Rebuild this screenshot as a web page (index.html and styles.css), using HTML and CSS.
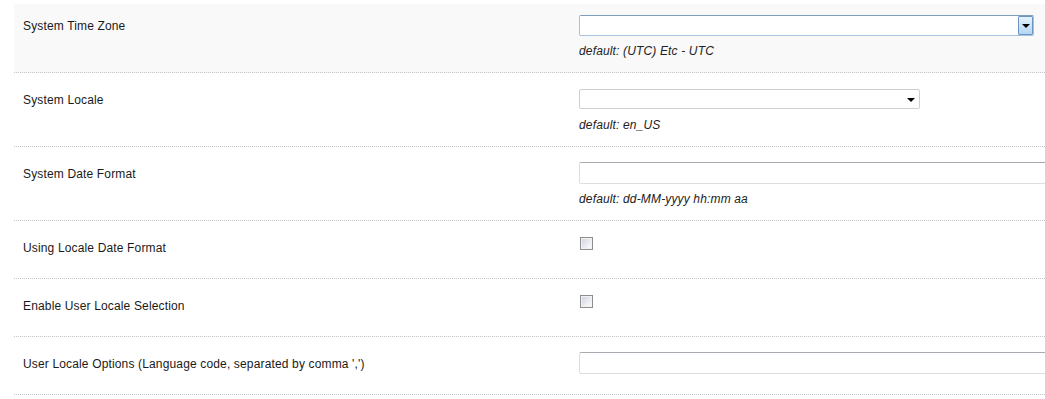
FILE: index.html
```html
<!DOCTYPE html>
<html>
<head>
<meta charset="utf-8">
<link rel="stylesheet" href="styles.css">
</head>
<body>
<div class="settings">
  <div class="row row-first row-hl">
    <div class="label">System Time Zone</div>
    <div class="field">
      <div class="tz-select"><span class="tz-btn"><span class="tri"></span></span></div>
      <div class="hint">default: (UTC) Etc - UTC</div>
    </div>
  </div>
  <div class="row">
    <div class="label">System Locale</div>
    <div class="field">
      <div class="select"><span class="tri"></span></div>
      <div class="hint hint-select">default: en_US</div>
    </div>
  </div>
  <div class="row">
    <div class="label">System Date Format</div>
    <div class="field">
      <input class="text" type="text">
      <div class="hint">default: dd-MM-yyyy hh:mm aa</div>
    </div>
  </div>
  <div class="row">
    <div class="label">Using Locale Date Format</div>
    <div class="field"><span class="check"></span></div>
  </div>
  <div class="row">
    <div class="label">Enable User Locale Selection</div>
    <div class="field"><span class="check"></span></div>
  </div>
  <div class="row">
    <div class="label">User Locale Options (Language code, separated by comma ',')</div>
    <div class="field"><input class="text" type="text"></div>
  </div>
</div>
</body>
</html>
```
FILE: styles.css
```css
html, body {
  margin: 0;
  padding: 0;
  overflow: hidden;
  background: #fff;
}
body {
  font-family: "Liberation Sans", Arial, sans-serif;
  font-size: 12px;
  letter-spacing: 0.15px;
  color: #1a1a1a;
}
.settings {
  padding: 4px 0 0 14px;
  overflow: hidden;
}
.row {
  display: grid;
  grid-template-columns: 565px 1fr;
  padding: 15px 0 14px 0;
  border-bottom: 1px dotted #c4c4c4;
}
.row-first {
  padding-top: 11px;
  padding-bottom: 14px;
}
.row-hl {
  background: #f9f9f9;
}
.label {
  padding: 5px 0 0 9px;
  line-height: 14px;
  min-height: 23px;
}
.row-first .label {
  padding-top: 4px;
}
.field {
  display: flex;
  flex-direction: column;
  align-items: flex-start;
  min-width: 0;
}
.hint {
  font-style: italic;
  line-height: 14px;
  color: #222;
  margin-top: 8px;
}
.hint-select {
  margin-top: 9px;
}
.tz-select {
  position: relative;
  box-sizing: border-box;
  width: 455px;
  height: 21px;
  background: #fff;
  border: 1px solid #a5c3de;
  border-top-color: #7f9db9;
  border-radius: 2px;
}
.tz-btn {
  position: absolute;
  right: 0;
  top: 0;
  bottom: 0;
  width: 15px;
  box-sizing: border-box;
  border: 1px solid #6b96c2;
  border-radius: 1px;
  background: linear-gradient(#e6f2fd, #b4d6f5);
  display: flex;
  align-items: center;
  justify-content: center;
}
.tri {
  width: 0;
  height: 0;
  border-left: 4px solid transparent;
  border-right: 4px solid transparent;
  border-top: 4px solid #000;
}
.select {
  box-sizing: border-box;
  width: 341px;
  height: 20px;
  margin-top: 1px;
  border: 1px solid #cfcfcf;
  border-radius: 2px;
  background: #fff;
  display: flex;
  align-items: center;
  justify-content: flex-end;
  padding-right: 4px;
}
.select .tri {
  margin-top: 1px;
}
.text {
  box-sizing: border-box;
  flex: none;
  width: 520px;
  height: 22px;
  margin: 0;
  padding: 0 4px;
  border: 1px solid #dedede;
  border-top-color: #a9a9b1;
  border-radius: 2px 0 0 2px;
  background: #fff;
  font: inherit;
}
.check {
  display: block;
  box-sizing: border-box;
  width: 13px;
  height: 13px;
  margin: 1px 0 0 1px;
  border: 1px solid #8e8e8e;
  box-shadow: inset 0 0 0 1px #f2f2f2;
  background: linear-gradient(135deg, #cfd3dc, #ffffff);
}
```
